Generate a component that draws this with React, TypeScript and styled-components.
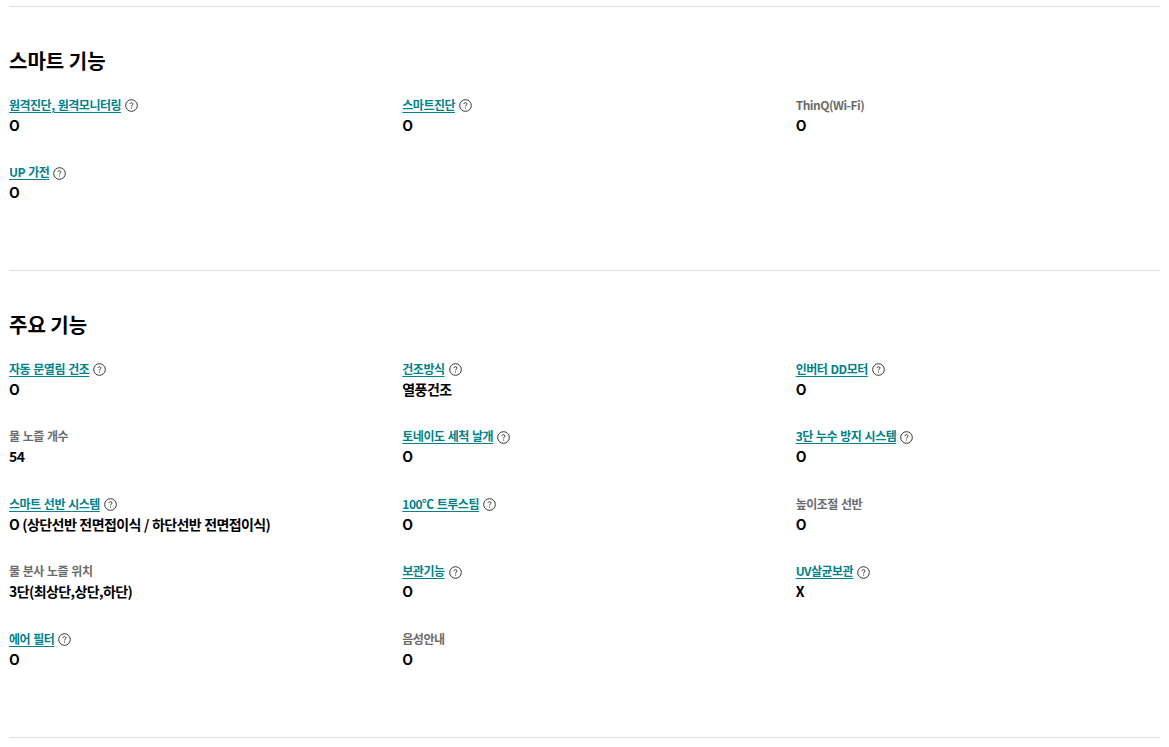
import styled, { createGlobalStyle } from 'styled-components';

const GlobalStyle = createGlobalStyle`
  html, body {
    margin: 0;
    background: #fff;
    font-family: 'Noto Sans CJK KR', 'Noto Sans', sans-serif;
  }
`;

const Page = styled.main`
  padding: 6px 9px 0;
`;

const Section = styled.section`
  border-top: 1px solid #ddd;
  padding: 39px 0 40.25px;
  &:last-of-type {
    padding-bottom: 0;
  }
`;

const Title = styled.h2`
  margin: 0 0 19.75px;
  font-size: 20px;
  line-height: 29px;
  font-weight: 700;
  color: #000;
`;

const Grid = styled.dl`
  margin: 0;
  display: grid;
  grid-template-columns: repeat(3, 1fr);
  column-gap: 29px;
`;

const Item = styled.div`
  height: 67.5px;
`;

const Label = styled.dt`
  display: flex;
  align-items: center;
  height: 20px;
  font-size: 12px;
  line-height: 20px;
  font-weight: 700;
  letter-spacing: -0.5px;
  word-spacing: 1px;
  color: #6b6b6b;
`;

const LabelLink = styled.a`
  color: #00828a;
  text-decoration: underline;
  text-underline-offset: 2px;
`;

const HelpIcon = styled.svg`
  width: 13px;
  height: 13px;
  margin: 2px 0 0 4px;
  flex: none;
`;

const Value = styled.dd`
  margin: 0;
  font-size: 14px;
  line-height: 20px;
  font-weight: 700;
  letter-spacing: -0.6px;
  word-spacing: 0.6px;
  color: #000;
`;

function Help() {
  return (
    <HelpIcon viewBox="0 0 13 13" fill="none" stroke="#333" strokeWidth="1">
      <circle cx="6.5" cy="6.5" r="5.8" />
      <path d="M5 5.100c0-.9.7-1.400 1.500-1.400S8 4.200 8 5c0 1.100-1.500 1.200-1.500 2.400" />
      <path d="M6.500 8.500v1" />
    </HelpIcon>
  );
}

type Spec = { label: string; value: string; link?: boolean };

const smart: Spec[] = [
  { label: '원격진단, 원격모니터링', value: 'O', link: true },
  { label: '스마트진단', value: 'O', link: true },
  { label: 'ThinQ(Wi-Fi)', value: 'O' },
  { label: 'UP 가전', value: 'O', link: true },
];

const main: Spec[] = [
  { label: '자동 문열림 건조', value: 'O', link: true },
  { label: '건조방식', value: '열풍건조', link: true },
  { label: '인버터 DD모터', value: 'O', link: true },
  { label: '물 노즐 개수', value: '54' },
  { label: '토네이도 세척 날개', value: 'O', link: true },
  { label: '3단 누수 방지 시스템', value: 'O', link: true },
  { label: '스마트 선반 시스템', value: 'O (상단선반 전면접이식 / 하단선반 전면접이식)', link: true },
  { label: '100℃ 트루스팀', value: 'O', link: true },
  { label: '높이조절 선반', value: 'O' },
  { label: '물 분사 노즐 위치', value: '3단(최상단,상단,하단)' },
  { label: '보관기능', value: 'O', link: true },
  { label: 'UV살균보관', value: 'X', link: true },
  { label: '에어 필터', value: 'O', link: true },
  { label: '음성안내', value: 'O' },
];

function SpecGrid({ items }: { items: Spec[] }) {
  return (
    <Grid>
      {items.map((item) => (
        <Item key={item.label}>
          <Label>
            {item.link ? <LabelLink href="#">{item.label}</LabelLink> : item.label}
            {item.link && <Help />}
          </Label>
          <Value>{item.value}</Value>
        </Item>
      ))}
    </Grid>
  );
}

export default function App() {
  return (
    <Page>
      <GlobalStyle />
      <Section>
        <Title>스마트 기능</Title>
        <SpecGrid items={smart} />
      </Section>
      <Section>
        <Title>주요 기능</Title>
        <SpecGrid items={main} />
      </Section>
      <Section />
    </Page>
  );
}
